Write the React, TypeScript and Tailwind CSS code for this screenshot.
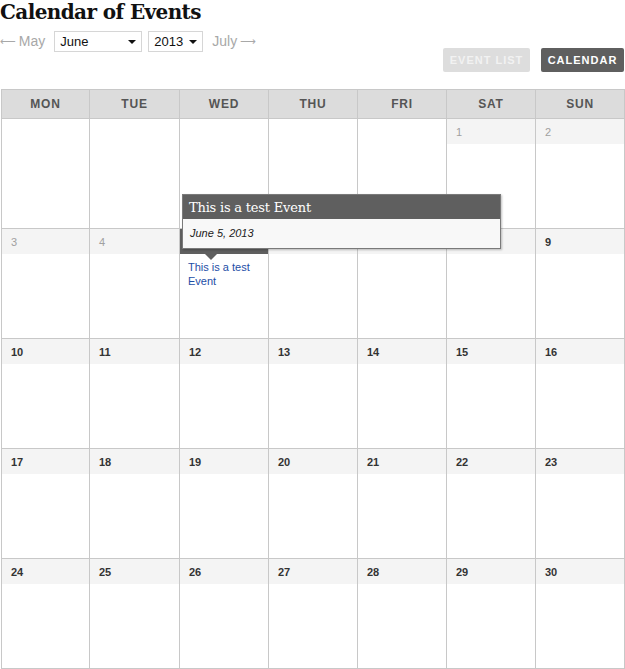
import React from "react";

const days = ["MON", "TUE", "WED", "THU", "FRI", "SAT", "SUN"];

type Cell = { day?: number; past?: boolean; event?: boolean };

const cells: Cell[] = [
    {}, {}, {}, {}, {},
    { day: 1, past: true }, { day: 2, past: true },
    { day: 3, past: true }, { day: 4, past: true }, { day: 5, event: true },
];
for (let d = 6; d <= 30; d++) cells.push({ day: d });

function DayCell({ cell }: { cell: Cell }) {
    if (!cell.day) {
        return <div className="h-[110px] border-r border-b border-[#c8c8c8] bg-white" />;
    }
    return (
        <div className="h-[110px] border-r border-b border-[#c8c8c8] bg-white">
            {cell.event ? (
                <div className="relative h-[25px] bg-[#5f5f5f]">
                    <div className="absolute left-[25px] top-[25px] h-0 w-0 border-x-[6px] border-t-[6px] border-x-transparent border-t-[#5f5f5f]" />
                </div>
            ) : (
                <div
                    className={
                        cell.past
                            ? "h-[25px] bg-[#f4f4f4] pl-[9px] pt-[5px] text-[11px] text-[#a0a0a0]"
                            : "h-[25px] bg-[#f4f4f4] pl-[9px] pt-[5px] text-[11px] font-bold text-[#333]"
                    }
                >
                    {cell.day}
                </div>
            )}
            {cell.event && (
                <div className="pl-[8px] pt-[6px] text-[11px] leading-[14px] text-[#1d4ea6]">
                    This is a test
                    <br />
                    Event
                </div>
            )}
        </div>
    );
}

export default function App() {
    return (
        <div className="relative w-[625px] h-[669px] bg-white font-['Liberation_Sans',Arial,sans-serif]">
            <h1 className="pt-[1px] text-[20px] leading-[22px] font-bold text-[#111] font-['DejaVu_Serif',Georgia,serif] tracking-[-0.6px]">
                Calendar of Events
            </h1>

            <div className="mt-[8px] flex items-center h-[21px]">
                <span className="flex items-center text-[14px] text-[#a8a8a8]">
                    <span className="font-['DejaVu_Sans',sans-serif] text-[11px] leading-[14px]">&#x27F5;</span>
                    <span className="ml-[3px]">May</span>
                </span>
                <div className="ml-[9px] flex h-[21px] w-[88px] items-center justify-between border border-[#d6d6d6] bg-white pl-[5px] pr-[5px] text-[13px] text-[#111]">
                    June
                    <span className="h-0 w-0 border-x-[4px] border-t-[4px] border-x-transparent border-t-[#111]" />
                </div>
                <div className="ml-[6px] flex h-[21px] w-[55px] items-center justify-between border border-[#d6d6d6] bg-white pl-[5px] pr-[5px] text-[13px] text-[#111]">
                    2013
                    <span className="h-0 w-0 border-x-[4px] border-t-[4px] border-x-transparent border-t-[#111]" />
                </div>
                <span className="ml-[9px] flex items-center text-[14px] text-[#a8a8a8]">
                    <span className="mr-[3px]">July</span>
                    <span className="font-['DejaVu_Sans',sans-serif] text-[11px] leading-[14px]">&#x27F6;</span>
                </span>
            </div>

            <div className="mt-[-4px] flex justify-end gap-[11px] pr-[1px]">
                <div className="flex h-[24px] w-[87px] items-center justify-center rounded-[2px] bg-[#dddddd] text-[11px] font-bold tracking-[1px] text-[#f2f2f2]">
                    EVENT LIST
                </div>
                <div className="flex h-[24px] w-[83px] items-center justify-center rounded-[2px] bg-[#5f5f5f] text-[11px] font-bold tracking-[1px] text-white">
                    CALENDAR
                </div>
            </div>

            <div className="ml-[1px] mt-[17px] w-[624px] border-l border-t border-[#c8c8c8]">
                <div className="grid grid-cols-[88px_90px_repeat(5,89px)] bg-[#dcdcdc]">
                    {days.map((d) => (
                        <div
                            key={d}
                            className="flex h-[29px] items-center justify-center border-r border-b border-[#c8c8c8] text-[12px] font-bold tracking-[0.8px] text-[#555]"
                        >
                            {d}
                        </div>
                    ))}
                </div>
                <div className="grid grid-cols-[88px_90px_repeat(5,89px)]">
                    {cells.map((c, i) => (
                        <DayCell key={i} cell={c} />
                    ))}
                </div>
            </div>

            <div className="absolute left-[182px] top-[194px] w-[319px] border border-[#7a7a7a] shadow-[1px_1px_2px_rgba(0,0,0,0.25)]">
                <div className="h-[24px] bg-[#5f5f5f] pl-[6px] pt-[3px] text-[13px] text-white font-['DejaVu_Serif',Georgia,serif] tracking-[-0.2px]">
                    This is a test Event
                </div>
                <div className="h-[29px] bg-[#f8f8f8] pl-[7px] pt-[6px] text-[11px] italic text-[#222]">
                    June 5, 2013
                </div>
            </div>
        </div>
    );
}
